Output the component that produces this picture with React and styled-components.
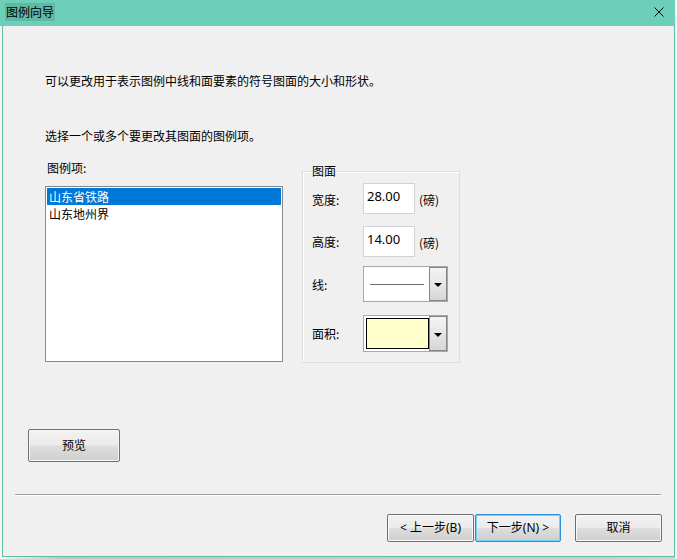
import React from 'react';
import styled, { createGlobalStyle } from 'styled-components';

const GlobalStyle = createGlobalStyle`
	html, body {
		margin: 0;
		padding: 0;
		background: #f7f5f5;
	}
	* {
		box-sizing: border-box;
	}
	body {
		font-family: 'Noto Sans', 'Noto Sans CJK SC', sans-serif;
		font-size: 12px;
		color: #000;
	}
`;

const Screen = styled.div`
	width: 677px;
	height: 559px;
	overflow: hidden;
	background: #f7f5f5;
`;

const Window = styled.div`
	width: 675px;
	display: flex;
	flex-direction: column;
`;

const TitleBar = styled.div`
	height: 26px;
	background: #6dcfb9;
	display: flex;
	align-items: flex-start;
	padding: 3px 11px 0 5px;
`;

const TitleText = styled.div`
	height: 18px;
	line-height: 18px;
	padding: 0 1px;
	background: #5fb9a3;
	font-family: 'Noto Sans CJK SC', sans-serif;
	font-size: 12px;
`;

const CloseBtn = styled.div`
	margin-left: auto;
	margin-top: 4px;
	width: 10px;
	height: 10px;
	display: flex;
`;

const Body = styled.div`
	margin-left: 2px;
	width: 673px;
	height: 531px;
	background: #f0f0f0;
	border: 1px solid #5fc0a8;
	border-top: none;
	display: flex;
	flex-direction: column;
`;

const Text = styled.div`
	margin-top: ${(p) => p.$mt}px;
	padding-left: 42px;
	line-height: 16px;
	font-family: 'Noto Sans CJK SC', sans-serif;
`;

const Middle = styled.div`
	margin-top: 16px;
	display: flex;
	align-items: flex-start;
`;

const ListColumn = styled.div`
	margin-left: 42px;
	display: flex;
	flex-direction: column;
`;

const ListLabel = styled.div`
	line-height: 16px;
	padding-left: 2px;
	font-family: 'Noto Sans CJK SC', sans-serif;
`;

const ListBox = styled.div`
	margin-top: 10px;
	width: 238px;
	height: 176px;
	background: #fff;
	border: 1px solid #82878f;
	padding: 1px;
`;

const ListItem = styled.div`
	height: 17px;
	line-height: 17px;
	padding-left: 2px;
	font-family: 'Noto Sans CJK SC', sans-serif;
	background: ${(p) => (p.$selected ? '#0078d7' : 'transparent')};
	color: ${(p) => (p.$selected ? '#fff' : '#000')};
`;

const GroupBox = styled.div`
	position: relative;
	margin-left: 19px;
	margin-top: 11px;
	width: 158px;
	height: 192px;
	border: 1px solid #d5dfe5;
	box-shadow: inset 1px 1px 0 #fff;
	padding: 11px 0 0 9px;
	display: flex;
	flex-direction: column;
`;

const Legend = styled.div`
	position: absolute;
	top: -8px;
	left: 8px;
	padding: 0 1px;
	line-height: 14px;
	background: #f0f0f0;
	font-family: 'Noto Sans CJK SC', sans-serif;
`;

const Row = styled.div`
	margin-top: ${(p) => p.$mt || 0}px;
	height: ${(p) => p.$h}px;
	display: flex;
	align-items: center;
`;

const Label = styled.div`
	width: 51px;
	line-height: 16px;
	padding-top: ${(p) => p.$shift || 0}px;
	font-family: 'Noto Sans CJK SC', sans-serif;
`;

const Input = styled.div`
	width: 52px;
	height: 31px;
	background: #fff;
	border: 1px solid #cfd3d8;
	padding: 4px 0 0 3px;
	line-height: 16px;
	font-size: 13px;
`;

const Unit = styled.div`
	margin-left: 4px;
	margin-top: 2px;
	font-family: 'Noto Sans CJK SC', sans-serif;
`;

const Dropdown = styled.div`
	width: 85px;
	height: 100%;
	background: #fff;
	border: 1px solid #a9a9a9;
	display: flex;
`;

const DropContent = styled.div`
	flex: 1;
	display: flex;
	align-items: center;
	padding: ${(p) => (p.$swatch ? '2px 0 2px 2px' : '0 5px 0 6px')};
`;

const LineSample = styled.div`
	width: 100%;
	height: 1px;
	background: #6d6d6d;
`;

const Swatch = styled.div`
	width: 100%;
	height: 100%;
	background: #ffffcc;
	border: 1px solid #000;
`;

const DropBtn = styled.div`
	width: 18px;
	margin: 0;
	border: 1px solid #858585;
	background: linear-gradient(#f4f4f4, #e6e6e6 50%, #d6d6d6);
	display: flex;
	align-items: center;
	justify-content: center;
`;

const Arrow = styled.div`
	width: 0;
	height: 0;
	border-left: 4px solid transparent;
	border-right: 4px solid transparent;
	border-top: 4px solid #000;
	margin-top: 2px;
`;

const Button = styled.button`
	width: ${(p) => p.$w}px;
	height: ${(p) => p.$h || 28}px;
	margin-left: ${(p) => p.$ml || 0}px;
	padding: 0;
	border: 1px solid ${(p) => (p.$focus ? '#2f8fd8' : '#707070')};
	border-radius: 2px;
	box-shadow: inset 0 0 0 1px ${(p) => (p.$focus ? '#6fd3f7' : '#f8f8f8')};
	background: linear-gradient(#f2f2f2, #ebebeb 48%, #dddddd 52%, #cfcfcf);
	font-family: 'Noto Sans', 'Noto Sans CJK SC', sans-serif;
	font-size: 12px;
	color: #000;
	line-height: 16px;
`;

const PreviewRow = styled.div`
	margin-top: 66px;
	margin-left: 25px;
	display: flex;
`;

const Separator = styled.div`
	margin-top: 32px;
	margin-left: 12px;
	width: 646px;
	height: 2px;
	border-top: 1px solid #a0a0a0;
	border-bottom: 1px solid #fff;
`;

const ButtonRow = styled.div`
	margin-top: 18px;
	display: flex;
	justify-content: flex-end;
	padding-right: 12px;
`;

const Shadow = styled.div`
	height: 2px;
	width: 675px;
	background: linear-gradient(to right, #f5f5f5, #c4c4c4 60px, #cfcfcf);
`;

export default function App() {
	return (
		<>
			<GlobalStyle />
			<Screen>
				<Window>
					<TitleBar>
						<TitleText>图例向导</TitleText>
						<CloseBtn>
							<svg width='10' height='10' viewBox='0 0 10 10'>
								<path d='M0.5 0.5 L9.5 9.5 M9.5 0.5 L0.5 9.5' stroke='#000' strokeWidth='1' fill='none' />
							</svg>
						</CloseBtn>
					</TitleBar>
					<Body>
						<Text $mt={47}>可以更改用于表示图例中线和面要素的符号图面的大小和形状。</Text>
						<Text $mt={39}>选择一个或多个要更改其图面的图例项。</Text>
						<Middle>
							<ListColumn>
								<ListLabel>图例项:</ListLabel>
								<ListBox>
									<ListItem $selected>山东省铁路</ListItem>
									<ListItem>山东地州界</ListItem>
								</ListBox>
							</ListColumn>
							<GroupBox>
								<Legend>图面</Legend>
								<Row $h={31}>
									<Label $shift={2}>宽度:</Label>
									<Input>28.00</Input>
									<Unit>(磅)</Unit>
								</Row>
								<Row $h={31} $mt={12}>
									<Label>高度:</Label>
									<Input>14.00</Input>
									<Unit>(磅)</Unit>
								</Row>
								<Row $h={36} $mt={9}>
									<Label $shift={2}>线:</Label>
									<Dropdown>
										<DropContent>
											<LineSample />
										</DropContent>
										<DropBtn>
											<Arrow />
										</DropBtn>
									</Dropdown>
								</Row>
								<Row $h={37} $mt={13}>
									<Label>面积:</Label>
									<Dropdown>
										<DropContent $swatch>
											<Swatch />
										</DropContent>
										<DropBtn>
											<Arrow />
										</DropBtn>
									</Dropdown>
								</Row>
							</GroupBox>
						</Middle>
						<PreviewRow>
							<Button $w={92} $h={33}>预览</Button>
						</PreviewRow>
						<Separator />
						<ButtonRow>
							<Button $w={87}>&lt; 上一步(B)</Button>
							<Button $w={86} $ml={1} $focus>下一步(N) &gt;</Button>
							<Button $w={87} $ml={14}>取消</Button>
						</ButtonRow>
					</Body>
					<Shadow />
				</Window>
			</Screen>
		</>
	);
}
